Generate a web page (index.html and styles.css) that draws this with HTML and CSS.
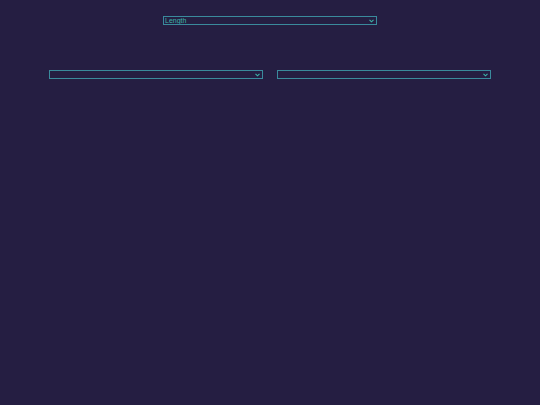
FILE: index.html
```html
<!DOCTYPE html>
<html>
<head>
<meta charset="utf-8">
<link rel="stylesheet" href="styles.css">
</head>
<body>
<div class="page">
  <div class="top-row">
    <select class="sel"><option>Length</option></select>
  </div>
  <div class="units-row">
    <select class="sel"><option>&nbsp;</option></select>
    <select class="sel"><option>&nbsp;</option></select>
  </div>
</div>
</body>
</html>
```
FILE: styles.css
```css
html, body {
  margin: 0;
  padding: 0;
  background: #251e42;
  height: 100%;
}
.page {
  display: flex;
  flex-direction: column;
  align-items: center;
  padding-top: 16px;
}
.top-row, .units-row {
  display: flex;
  justify-content: center;
  gap: 14px;
  height: 9px;
}
.units-row {
  margin-top: 45px;
}
.sel {
  -webkit-appearance: none;
  appearance: none;
  display: block;
  width: 214px;
  height: 9px;
  box-sizing: border-box;
  margin: 0;
  padding: 0 0 0 1px;
  font-family: "Liberation Sans", Arial, sans-serif;
  font-size: 7px;
  line-height: 7px;
  color: #3cb4a8;
  background-color: #251e42;
  background-image: url("data:image/svg+xml;utf8,<svg xmlns='http://www.w3.org/2000/svg' width='5' height='4' viewBox='0 0 5 4'><path d='M0.5 0.8 L2.5 2.8 L4.5 0.8' fill='none' stroke='%233cb4a8' stroke-width='1.1'/></svg>");
  background-repeat: no-repeat;
  background-position: right 2px center;
  background-size: 5px 4px;
  border: 1px solid #3a8a9c;
  border-radius: 0;
  outline: none;
}
```
